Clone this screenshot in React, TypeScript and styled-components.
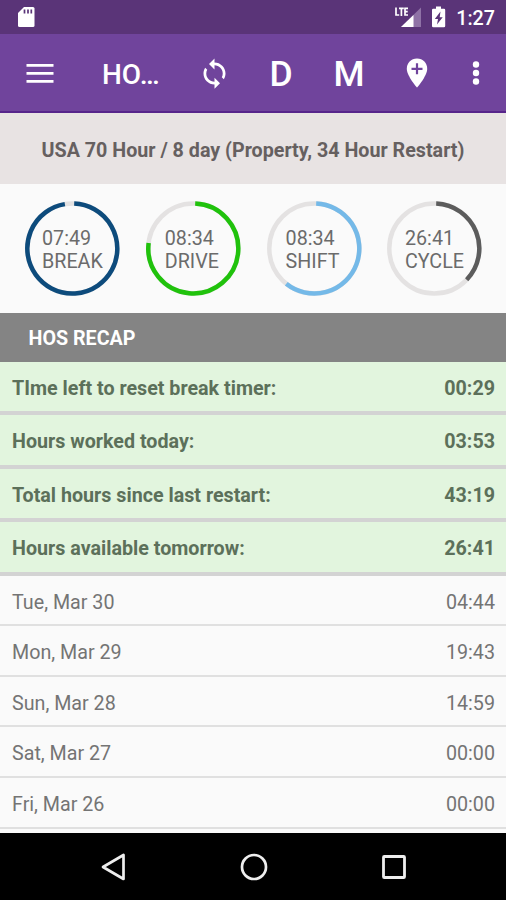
import React from "react";
import styled, { createGlobalStyle } from "styled-components";

const GlobalStyle = createGlobalStyle`
  *, *::before, *::after { box-sizing: border-box; }
  body { margin: 0; background: #fafafa; font-family: Roboto, sans-serif; }
  svg { display: block; }
`;

const Screen = styled.main`
  display: flex;
  flex-direction: column;
  width: 506px;
  height: 900px;
  overflow: hidden;
  background: #fafafa;
  color: #6b6b6b;
  font-size: 19.7px;
`;

const StatusBar = styled.div`
  display: flex;
  align-items: center;
  height: 34px;
  padding: 0 11px 0 16px;
  background: #5a3478;
  color: #fff;
`;

const StatusIcons = styled.div`
  display: flex;
  align-items: center;
  gap: 10px;
  margin-left: auto;
`;

const Clock = styled.span`
  font-size: 19.7px;
  font-weight: 500;
  line-height: 24px;
  margin-top: 3px;
`;

const AppBar = styled.header`
  display: flex;
  align-items: center;
  height: 79px;
  padding-left: 26px;
  background: #70449c;
  border-bottom: 2px solid #57258b;
  color: #fff;
`;

const Title = styled.h1`
  margin: 0 0 0 48px;
  width: 94px;
  font-size: 28px;
  font-weight: 500;
  line-height: 32px;
  padding-top: 4px;
`;

const BarLetter = styled.span<{ $width: number }>`
  width: ${(p) => p.$width}px;
  padding-top: 2px;
  font-size: 35.5px;
  font-weight: 500;
  line-height: 40px;
  text-align: center;
`;

const BarIcon = styled.span<{ $width: number }>`
  display: flex;
  justify-content: center;
  width: ${(p) => p.$width}px;
  padding-top: 1px;
`;

const RuleBanner = styled.div`
  height: 71px;
  padding-top: 1px;
  background: #e8e3e3;
  font-weight: 700;
  line-height: 74px;
  text-align: center;
  color: #666060;
`;

const Gauges = styled.section`
  display: grid;
  grid-template-columns: repeat(4, 120.8px);
  height: 129px;
  padding: 16px 0 0 12px;
`;

const Gauge = styled.div`
  display: grid;
  width: 120px;
  height: 97px;
`;

const Ring = styled.svg`
  grid-area: 1 / 1;
`;

const GaugeText = styled.div<{ $indent: number }>`
  grid-area: 1 / 1;
  padding: 28px 0 0 ${(p) => p.$indent}px;
  line-height: 22.6px;
  white-space: nowrap;
`;

const SectionHeading = styled.h2`
  margin: 0;
  height: 49px;
  padding-left: 28.5px;
  background: #848484;
  color: #fff;
  font-size: 19.7px;
  font-weight: 700;
  line-height: 52px;
`;

const SummaryRow = styled.div`
  display: flex;
  justify-content: space-between;
  height: 53.4px;
  padding: 0 11px 0 12px;
  background: #e2f5de;
  border-bottom: 4px solid #d3d3d3;
  color: #5c705a;
  font-size: 19.7px;
  font-weight: 700;
  line-height: 53px;
`;

const DayRow = styled.div`
  display: flex;
  justify-content: space-between;
  height: 50.6px;
  padding: 0 11px 0 12px;
  border-bottom: 2px solid #e0e0e0;
  line-height: 53px;
  color: #747474;
`;

const ListArea = styled.section`
  flex: 1;
  overflow: hidden;
`;

const NavBar = styled.nav`
  display: flex;
  align-items: center;
  justify-content: space-between;
  height: 67px;
  padding: 0 99px 0 100px;
  background: #000;
`;

type GaugeData = { time: string; label: string; color: string; end: number; indent: number };

const gauges: GaugeData[] = [
  { time: "07:49", label: "BREAK", color: "#0d4b7c", end: 350.5, indent: 30 },
  { time: "08:34", label: "DRIVE", color: "#20c20c", end: 277, indent: 32 },
  { time: "08:34", label: "SHIFT", color: "#74b9e8", end: 218.5, indent: 32 },
  { time: "26:41", label: "CYCLE", color: "#5c5c5c", end: 134, indent: 30.6 },
];

const summary = [
  ["TIme left to reset break timer:", "00:29"],
  ["Hours worked today:", "03:53"],
  ["Total hours since last restart:", "43:19"],
  ["Hours available tomorrow:", "26:41"],
];

const days = [
  ["Tue, Mar 30", "04:44"],
  ["Mon, Mar 29", "19:43"],
  ["Sun, Mar 28", "14:59"],
  ["Sat, Mar 27", "00:00"],
  ["Fri, Mar 26", "00:00"],
];

const START_ANGLE = 2.4;
const RADIUS = 45;

function point(angle: number) {
  const a = (angle * Math.PI) / 180;
  return `${60.300 + RADIUS * Math.sin(a)} ${48.5 - RADIUS * Math.cos(a)}`;
}

function arc(end: number) {
  const large = end - START_ANGLE > 180 ? 1 : 0;
  return `M${point(START_ANGLE)} A${RADIUS} ${RADIUS} 0 ${large} 1 ${point(end)}`;
}

export default function App() {
  return (
    <>
      <GlobalStyle />
      <Screen>
        <StatusBar>
          <svg width="20" height="22" viewBox="0 0 20 22">
            <path d="M8 1h9q1.500 0 1.500 1.500v17q0 1.500-1.500 1.500H3.500Q2 21 2 19.500V7z" fill="#fff" />
            <path d="M8.500 3.500v4M12 3.500v4M15.300 3.500v4" stroke="#5a3478" strokeWidth="1.700" />
          </svg>
          <StatusIcons>
            <svg width="27" height="22" viewBox="-1 -0.500 27 22">
              <path d="M26 1v19.500H6z" fill="#8f72a6" />
              <path d="M18.500 8.500v12H6z" fill="#fff" />
              <path d="M-1 0h15.500v10H-1z" fill="#5a3478" />
              <path d="M1 1v7.500h3.200M4 1.800h4.800M6.400 1.800v7.700M13 1.800h-3v6.700h3M10 5.100h2.700" stroke="#fff" strokeWidth="1.700" fill="none" />
            </svg>
            <svg width="15" height="22" viewBox="-0.500 -0.500 15 22">
              <path d="M4.500 0h5v2.300H12.500q1.200 0 1.200 1.200v16q0 1.200-1.200 1.200H1.700Q.5 20.700 .5 19.500V3.500Q.5 2.300 1.700 2.300h2.800z" fill="#fff" />
              <path d="M9 5 3.300 12.500h3.200L5.500 18l5.700-7.300H8.200z" fill="#5a3478" />
            </svg>
            <Clock>1:27</Clock>
          </StatusIcons>
        </StatusBar>

        <AppBar>
          <svg width="28" height="20" viewBox="0 0 28 20">
            <path d="M.5 2.300h27M.5 10.300h27M.5 18.300h27" stroke="#fff" strokeWidth="2.800" />
          </svg>
          <Title>HO…</Title>
          <BarIcon $width={36}>
            <svg width="33" height="33" viewBox="0 0 24 24" fill="#fff">
              <path d="M12 4V1L8 5l4 4V6c3.310 0 6 2.690 6 6 0 1.010-.250 1.970-.700 2.800l1.460 1.460C19.540 15.030 20 13.570 20 12c0-4.420-3.580-8-8-8zm0 14c-3.310 0-6-2.690-6-6 0-1.010.250-1.970.700-2.800L5.240 7.740C4.460 8.970 4 10.430 4 12c0 4.420 3.580 8 8 8v3l4-4-4-4v3z" />
            </svg>
          </BarIcon>
          <BarLetter $width={98}>D</BarLetter>
          <BarLetter $width={38}>M</BarLetter>
          <BarIcon $width={98}>
            <svg width="22" height="30" viewBox="0 0 22 30">
              <path d="M11 .5C5 .5.8 5 .8 10.700.8 18 11 29.500 11 29.500S21.200 18 21.200 10.700C21.200 5 17 .5 11 .5z" fill="#fff" />
              <path d="M11 5.300v11M5.500 10.800h11" stroke="#70449c" strokeWidth="2.200" />
            </svg>
          </BarIcon>
          <BarIcon $width={20}>
            <svg width="8" height="26" viewBox="0 0 8 26" fill="#fff">
              <circle cx="4" cy="4.500" r="3.200" />
              <circle cx="4" cy="13" r="3.200" />
              <circle cx="4" cy="21.500" r="3.200" />
            </svg>
          </BarIcon>
        </AppBar>

        <RuleBanner>USA 70 Hour / 8 day (Property, 34 Hour Restart)</RuleBanner>

        <Gauges>
          {gauges.map((g) => (
            <Gauge key={g.label}>
              <Ring width="120" height="97" viewBox="0 0 120 97" fill="none" strokeWidth="4.500">
                <circle cx="60.300" cy="48.500" r={RADIUS} stroke="#e4e2e2" />
                <path d={arc(g.end)} stroke={g.color} />
              </Ring>
              <GaugeText $indent={g.indent}>
                {g.time}
                <br />
                {g.label}
              </GaugeText>
            </Gauge>
          ))}
        </Gauges>

        <SectionHeading>HOS RECAP</SectionHeading>
        <ListArea>
          {summary.map(([label, value]) => (
            <SummaryRow key={label}>
              <span>{label}</span>
              <span>{value}</span>
            </SummaryRow>
          ))}
          {days.map(([label, value]) => (
            <DayRow key={label}>
              <span>{label}</span>
              <span>{value}</span>
            </DayRow>
          ))}
        </ListArea>

        <NavBar>
          <svg width="26" height="28" viewBox="0 0 26 28">
            <path d="M23.500 2v24L3 14z" fill="none" stroke="#eee" strokeWidth="2.700" strokeLinejoin="round" />
          </svg>
          <svg width="28" height="28" viewBox="0 0 28 28">
            <circle cx="14" cy="14" r="12" fill="none" stroke="#eee" strokeWidth="2.700" />
          </svg>
          <svg width="26" height="26" viewBox="0 0 26 26">
            <rect x="2.500" y="2.500" width="21" height="21" rx=".8" fill="none" stroke="#eee" strokeWidth="2.800" />
          </svg>
        </NavBar>
      </Screen>
    </>
  );
}
